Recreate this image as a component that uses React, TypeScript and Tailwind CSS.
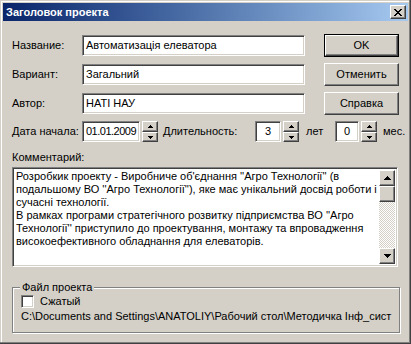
import React from "react";

const sunken =
  "bg-white border border-t-[#808080] border-l-[#808080] border-b-white border-r-white shadow-[inset_1px_1px_0_#404040,inset_-1px_-1px_0_#d4d0c8]";
const raised =
  "bg-[#d4d0c8] border border-t-white border-l-white border-b-[#404040] border-r-[#404040] shadow-[inset_-1px_-1px_0_#808080]";

const commentLines = [
  "Розробкик проекту - Виробниче об'єднання ''Агро Технології'' (в",
  "подальшому ВО ''Агро Технології''), яке має унікальний досвід роботи і",
  "сучасні технології.",
  "В рамках програми стратегічного розвитку підприємства ВО ''Агро",
  "Технології'' приступило до проектування, монтажу та впровадження",
  "високоефективного обладнання для елеваторів.",
];

const Arrow = ({ down, w = 5 }: { down?: boolean; w?: number }) => {
  const h = Math.ceil(w / 2);
  const rows = Array.from({ length: h }, (_, i) => i);
  return (
    <svg width={w} height={h} shapeRendering="crispEdges" className="block">
      {rows.map((i) => {
        const y = down ? i : h - 1 - i;
        return <rect key={i} x={i} y={y} width={w - 2 * i} height={1} fill="#000" />;
      })}
    </svg>
  );
};

const Spinner = () => (
  <div className="flex flex-col shrink-0 w-[16px] h-[21px] ml-[2px]">
    <div className={`${raised} h-[11px] flex items-center justify-center`}>
      <Arrow />
    </div>
    <div className={`${raised} h-[10px] flex items-center justify-center`}>
      <Arrow down />
    </div>
  </div>
);

const Field = ({ label, value }: { label: string; value: string }) => (
  <div className="flex items-center h-[23px]">
    <span className="w-[70px] shrink-0">{label}</span>
    <div className={`${sunken} w-[223px] h-[21px] flex items-center px-[3px] whitespace-nowrap overflow-hidden`}>
      {value}
    </div>
  </div>
);

const Button = ({ children, def }: { children: React.ReactNode; def?: boolean }) =>
  def ? (
    <div className="w-[75px] h-[23px] border border-black">
      <div className={`${raised} w-full h-full flex items-center justify-center`}>{children}</div>
    </div>
  ) : (
    <div className={`${raised} w-[75px] h-[23px] flex items-center justify-center`}>{children}</div>
  );

export default function App() {
  return (
    <div className="w-[411px] h-[344px] bg-[#d4d0c8] text-black text-[11px] leading-[13px] font-['Liberation_Sans',Arial,sans-serif] shadow-[inset_-1px_-1px_0_#404040,inset_-2px_-2px_0_#808080,inset_1px_1px_0_#d4d0c8,inset_2px_2px_0_#ffffff] overflow-hidden">
      <div className="px-[3px] pt-[3px]">
        <div className="h-[18px] bg-linear-to-r from-[#0a246a] to-[#a6caf0] flex items-center justify-between pl-[3px] pr-[2px]">
          <span className="text-white font-bold text-[11px]">Заголовок проекта</span>
          <div className={`${raised} w-[16px] h-[14px] flex items-center justify-center`}>
            <svg width="8" height="7" shapeRendering="crispEdges">
              <path d="M0 0h2v1H0zM6 0h2v1H6zM1 1h2v1H1zM5 1h2v1H5zM2 2h4v1H2zM3 3h2v1H3zM2 4h4v1H2zM1 5h2v1H1zM5 5h2v1H5zM0 6h2v1H0zM6 6h2v1H6z" fill="#000" />
            </svg>
          </div>
        </div>
      </div>

      <div className="px-[12px] pt-[13px]">
        <div className="flex justify-between">
          <div className="flex flex-col gap-[6px]">
            <Field label="Название:" value="Автоматизація елеватора" />
            <Field label="Вариант:" value="Загальний" />
            <Field label="Автор:" value="НАТІ НАУ" />
          </div>
          <div className="flex flex-col gap-[6px]">
            <Button def>OK</Button>
            <Button>Отменить</Button>
            <Button>Справка</Button>
          </div>
        </div>

        <div className="flex items-center h-[21px] mt-[6px] whitespace-nowrap">
          <span className="w-[70px] shrink-0">Дата начала:</span>
          <div className={`${sunken} shrink-0 w-[58px] h-[21px] flex items-center px-[3px] tracking-[-0.5px]`}>01.01.2009</div>
          <Spinner />
          <span className="ml-[5px] w-[92px] shrink-0">Длительность:</span>
          <div className={`${sunken} shrink-0 w-[26px] h-[21px] flex items-center justify-center`}>3</div>
          <Spinner />
          <span className="ml-[7px] w-[29px] shrink-0">лет</span>
          <div className={`${sunken} shrink-0 w-[24px] h-[21px] flex items-center justify-center`}>0</div>
          <Spinner />
          <span className="ml-[6px] shrink-0">мес.</span>
        </div>

        <div className="mt-[9px] h-[13px]">Комментарий:</div>

        <div className={`${sunken} mt-[3px] w-[386px] h-[100px] flex p-[2px]`}>
          <div className="flex-1 pl-[1px]">
            {commentLines.map((l) => (
              <div key={l} className="whitespace-nowrap">
                {l}
              </div>
            ))}
          </div>
          <div className="w-[16px] flex flex-col">
            <div className={`${raised} h-[16px] flex items-center justify-center`}>
              <Arrow w={7} />
            </div>
            <div className={`${raised} h-[16px]`} />
            <div className="flex-1 bg-[image:repeating-conic-gradient(#d4d0c8_0_25%,#ffffff_0_50%)] bg-[length:2px_2px]" />
            <div className={`${raised} h-[16px] flex items-center justify-center`}>
              <Arrow w={7} down />
            </div>
          </div>
        </div>

        <fieldset className="mt-[14px] w-[386px] h-[52px] border border-[#808080] shadow-[1px_1px_0_#ffffff,inset_1px_1px_0_#ffffff] px-[8px]">
          <legend className="px-[2px] ml-[-1px] bg-[#d4d0c8]">Файл проекта</legend>
          <div className="flex items-center h-[13px] mt-[1px]">
            <div className={`${sunken} w-[13px] h-[13px]`} />
            <span className="ml-[6px]">Сжатый</span>
          </div>
          <div className="mt-[2px] whitespace-nowrap">
            C:\Documents and Settings\ANATOLIY\Рабочий стол\Методичка Інф_сист
          </div>
        </fieldset>
      </div>
    </div>
  );
}
